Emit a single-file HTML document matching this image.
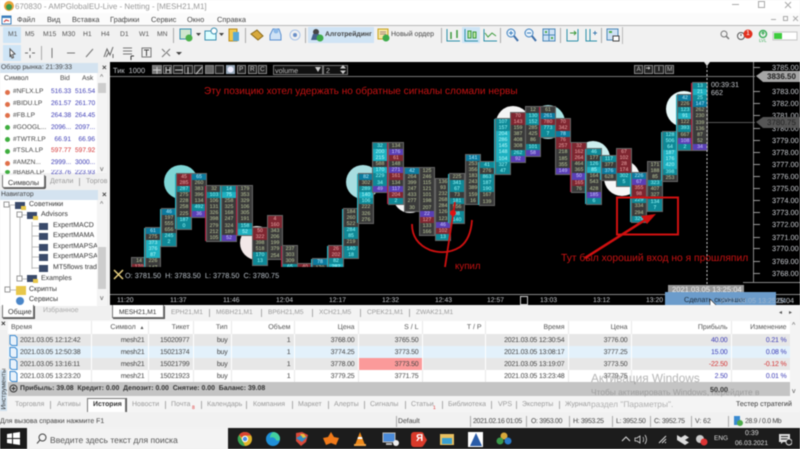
<!DOCTYPE html>
<html lang="ru"><head><meta charset="utf-8"><title>MT5</title>
<style>
*{box-sizing:border-box}
html,body{margin:0;padding:0;width:800px;height:449px;overflow:hidden;background:#f0f0f0}
body{font-family:"Liberation Sans","DejaVu Sans",sans-serif;font-size:7px;color:#333;text-rendering:geometricPrecision}
#p{position:absolute;left:0;top:0;width:800px;height:449px;overflow:hidden;filter:blur(.42px)}
.a{position:absolute;white-space:nowrap}
.r{position:absolute}
#chart{position:absolute;left:110px;top:62px;width:690px;height:243px;background:#000}
.c{position:absolute;width:14px;outline:1px solid #666;outline-offset:-.5px;background:#3a3a3a}
.c i{display:block;height:6.1px;line-height:6.1px;font-style:normal;font-size:5.2px;text-align:center;color:#c2cfa0;overflow:hidden}
.c .t{background:#0f8896;color:#9ff}
.c .k{background:#1eb0c0;color:#bff}
.c .e{background:#7e2630;color:#eaa}
.c .v{background:#5a3fb5;color:#ccf}
.c .b{background:#0b7a9e;color:#bef}
.L{box-shadow:-2px 0 0 #1fb8c8}
.X{box-shadow:-2px 0 0 #b8173a}
.m{position:absolute;color:#444;font-size:7.4px;top:15px}
.tf{position:absolute;top:31px;font-size:6.8px;color:#555}
.ax{position:absolute;left:772px;color:#c6c9ce;font-size:7.4px}
.tick{position:absolute;left:753px;width:7px;height:1px;background:#999}
.tm{position:absolute;top:296.500px;color:#c6c9ce;font-size:6.800px}
.bt{position:absolute;top:65px;width:9px;height:9px;border:1px solid #888;background:#222}
table{position:absolute;border-collapse:collapse;table-layout:fixed}
td,th{padding:0 3px;overflow:hidden;white-space:nowrap;font-weight:normal;border-right:1px solid #fff;font-size:7px;color:#444}
.tb td,.tb th{height:12px;text-align:right;letter-spacing:-.2px}
.tb th{height:13px;background:#fff;color:#555;border-right:1px solid #e8e8e8;letter-spacing:0}
.g td{background:#e7e7e7}.l td{background:#e3f1fb}.w td{background:#fff;border-right:1px solid #e8e8e8}
.bl{color:#3b3bb5!important}.rd{color:#d43030!important}
.tab{position:absolute;top:308.500px;color:#999;font-size:6.600px}
.bot{position:absolute;top:401px;color:#999;font-size:7px}
.sep{position:absolute;width:1px;background:#aaa}
.st{position:absolute;top:418px;color:#444;font-size:6.900px}
.sd{letter-spacing:-.3px}
.ico{position:absolute}
.mw td{border:0;font-size:6.600px;padding:0 2px;height:11.800px;text-align:right;color:#3b3bb5;background:#fff}
.mw td:first-child{text-align:left;color:#444;padding-left:13px}
.nv{position:absolute;font-size:7px;color:#333}
.dot{position:absolute;left:5px;width:5px;height:5px;border-radius:50%}
</style></head><body><div id="p">

<!-- title -->
<div class="r" style="left:0;top:0;width:800px;height:13px;background:#fff"></div>
<svg class="ico" style="left:3px;top:0" width="12" height="12"><circle cx="6" cy="6" r="5" fill="#e8a33a"/><circle cx="6" cy="7" r="3" fill="#3a9a4a"/></svg>
<div class="a" style="left:15px;top:1.500px;color:#999;font-size:8px">670830 - AMPGlobalEU-Live - Netting - [MESH21,M1]</div>
<div class="r" style="left:732px;top:4px;width:7px;height:1px;background:#aaa"></div>
<div class="r" style="left:758px;top:1px;width:7px;height:7px;border:1px solid #aaa"></div>
<svg class="ico" style="left:784px;top:1px" width="8" height="8"><path d="M1 1L7 7M7 1L1 7" stroke="#aaa"/></svg>

<!-- menu -->
<div class="r" style="left:0;top:13px;width:800px;height:13px;background:#fbfbfb;border-bottom:1px solid #b9b9b9"></div>
<svg class="ico" style="left:1px;top:14px" width="11" height="11"><rect x="1" y="2" width="9" height="8" fill="#fff" stroke="#3a7dbb"/><rect x="1" y="2" width="9" height="2" fill="#3a7dbb"/><path d="M3 8l2-2 3 1" stroke="#c33" fill="none"/></svg>
<span class="m" style="left:17px">Файл</span><span class="m" style="left:47px">Вид</span><span class="m" style="left:72px">Вставка</span><span class="m" style="left:110px">Графики</span><span class="m" style="left:151px">Сервис</span><span class="m" style="left:187px">Окно</span><span class="m" style="left:217px">Справка</span>
<div class="a" style="left:771px;top:19px;width:5px;height:1px;background:#aaa"></div>
<div class="a" style="left:783px;top:16px;width:5px;height:5px;border:1px solid #aaa"></div>
<svg class="ico" style="left:793px;top:16px" width="6" height="6"><path d="M0 0L5 5M5 0L0 5" stroke="#aaa"/></svg>

<!-- toolbar -->
<div class="r" style="left:0;top:26px;width:800px;height:36px;background:#f1f1f1"></div>
<div class="r" style="left:3px;top:27px;width:18px;height:16px;background:#cfe5f6"></div>
<span class="tf" style="left:8px">M1</span><span class="tf" style="left:25px">M5</span><span class="tf" style="left:43px">M15</span><span class="tf" style="left:62px">M30</span><span class="tf" style="left:83px">H1</span><span class="tf" style="left:101px">H4</span><span class="tf" style="left:120px">D1</span><span class="tf" style="left:139px">W1</span><span class="tf" style="left:157px">MN</span>
<div class="sep" style="left:173px;top:28px;height:15px"></div>
<svg class="ico" style="left:178px;top:27px" width="110" height="16">
<rect x="2" y="2" width="11" height="10" fill="#cfe6cf" stroke="#3a8fb0"/><circle cx="11" cy="11" r="3.500" fill="#4bb04b"/><path d="M18 6h5l-2.500 3z" fill="#444"/>
<rect x="27" y="4" width="11" height="9" fill="#dff" stroke="#3a8fb0"/><circle cx="36" cy="4" r="3" fill="#fff" stroke="#3a8fb0"/><path d="M41 6h5l-2.500 3z" fill="#444"/>
<rect x="51" y="2" width="8" height="12" fill="#f2c84b" stroke="#b58a20"/><rect x="55" y="5" width="6" height="9" fill="#5aa9d6"/>
</svg>
<div class="sep" style="left:245px;top:28px;height:15px"></div>
<svg class="ico" style="left:249px;top:27px" width="55" height="16">
<path d="M2 7l6-4 6 6-5 4z" fill="#d7a93c" stroke="#8a6a1a"/><path d="M24 2h6l2 6v5H21V8z" fill="#cfe2f5" stroke="#5a8fd0"/><circle cx="27" cy="4" r="2.500" fill="#8ab8e8"/>
<circle cx="46" cy="8" r="2" fill="#6a8fc8"/><circle cx="46" cy="8" r="5" fill="none" stroke="#aac4e8"/>
</svg>
<div class="sep" style="left:305px;top:28px;height:15px"></div>
<div class="r" style="left:308px;top:27px;width:66px;height:16px;background:#d0e4f5"></div>
<svg class="ico" style="left:310px;top:28px" width="14" height="14"><circle cx="6" cy="4" r="3" fill="#444"/><path d="M1 12l2-6h6l2 6z" fill="#44618a"/><circle cx="10" cy="10" r="3.500" fill="#3daa4a"/></svg>
<div class="a" style="left:325px;top:31px;font-weight:bold;font-size:6.800px;color:#444">Алготрейдинг</div>
<svg class="ico" style="left:377px;top:28px" width="13" height="14"><rect x="1" y="1" width="10" height="10" fill="#f4e6a0" stroke="#c9a420"/><path d="M3 4h6M3 6h6" stroke="#a88"/><circle cx="9" cy="10" r="3.500" fill="#3daa4a"/></svg>
<div class="a" style="left:391px;top:31px;font-size:7px;color:#444">Новый ордер</div>
<div class="sep" style="left:441px;top:28px;height:15px"></div>
<div class="r" style="left:462px;top:27px;width:18px;height:16px;background:#cfe5f6"></div>
<svg class="ico" style="left:444px;top:27px" width="90" height="16" fill="none">
<path d="M3 2v12h13" stroke="#2a8fa8"/><path d="M7 5v7M13 3v8" stroke="#3c9a3c" stroke-width="1.500"/>
<path d="M21 2v12h13" stroke="#2a8fa8"/><rect x="24" y="4" width="3" height="7" fill="#bfe6a8" stroke="#3c9a3c"/><rect x="29" y="5" width="3" height="6" fill="#bfe6a8" stroke="#3c9a3c"/>
<path d="M40 2v12h13" stroke="#2a8fa8"/><path d="M41 6l3 4 4-4 4 3" stroke="#3c9a3c"/>
</svg>
<div class="sep" style="left:500px;top:28px;height:15px"></div>
<svg class="ico" style="left:505px;top:27px" width="60" height="16" fill="none">
<circle cx="6" cy="6" r="4" stroke="#3d7fbf" fill="#e8f3fb"/><path d="M4 6h4M6 4v4" stroke="#3d7fbf"/><path d="M9 9l4 5" stroke="#3d6ea8" stroke-width="2"/>
<circle cx="24" cy="6" r="4" stroke="#3d7fbf" fill="#e8f3fb"/><path d="M22 6h4" stroke="#3d7fbf"/><path d="M27 9l4 5" stroke="#3d6ea8" stroke-width="2"/>
<rect x="38" y="2" width="12" height="12" fill="#cfe2f5" stroke="#4b88b8"/><path d="M44 2v12M38 8h12" stroke="#4b88b8"/><rect x="40" y="4" width="2" height="2" fill="#4caa4a"/><rect x="46" y="10" width="2" height="2" fill="#4caa4a"/>
</svg>
<div class="sep" style="left:560px;top:28px;height:15px"></div>
<svg class="ico" style="left:565px;top:27px" width="70" height="16" fill="none">
<path d="M2 2v12h11M13 2v12" stroke="#2a8fa8"/><path d="M5 6h6" stroke="#3c9a3c"/><path d="M9 4l2 2-2 2" stroke="#3c9a3c"/>
<path d="M21 2v12h11" stroke="#2a8fa8"/><path d="M25 2v12" stroke="#2a8fa8"/><path d="M28 6h4M30 4v4" stroke="#3c7ab0"/>
</svg>
<div class="sep" style="left:601px;top:28px;height:15px"></div>
<svg class="ico" style="left:606px;top:28px" width="14" height="14" fill="none"><rect x="1" y="1" width="11" height="11" fill="#cfe2f5" stroke="#4b88b8"/><rect x="3" y="3" width="3" height="2" fill="#4caa4a"/><rect x="7" y="8" width="6" height="5" fill="#fff" stroke="#444"/></svg>
<div class="r" style="left:622px;top:27px;width:1px;height:17px;background:#bbb"></div>
<svg class="ico" style="left:720px;top:29px" width="80" height="14" fill="none">
<circle cx="4" cy="5" r="3" stroke="#777"/><path d="M6 7l3 3" stroke="#777" stroke-width="1.500"/>
<circle cx="21" cy="7" r="3.500" stroke="#555"/><path d="M21 5v2" stroke="#555"/>
<circle cx="28" cy="5" r="4.500" fill="#e2301e"/>
<circle cx="43" cy="5" r="3.500" stroke="#3fae5a" stroke-width="1.500"/><path d="M43 6V3M41.500 4.500L43 3l1.500 1.500" stroke="#3fae5a"/>
<rect x="53" y="3" width="24" height="8" fill="#fff" stroke="#c6c6c6"/><rect x="54" y="4" width="8" height="6" fill="#3ecb3e"/>
</svg>
<div class="a" style="left:759px;top:38px;color:#3fae5a;font-size:4.500px">LVL</div>
<div class="a" style="left:746px;top:30px;color:#fff;font-size:7px">1</div>

<!-- tool row -->
<div class="r" style="left:3px;top:45px;width:18px;height:16px;background:#cfe5f6"></div>
<svg class="ico" style="left:5px;top:45px" width="185" height="16" fill="none">
<path d="M5 4l5 5-2.500.5 1 3-1.500.5-1-3L5 12z" fill="#fff" stroke="#555"/>
<path d="M25 3v3M25 10v3M20 8h3M27 8h3" stroke="#666"/>
<path d="M47 3v10" stroke="#777"/><path d="M62 8h8" stroke="#777"/><path d="M81 12l7-8" stroke="#777"/>
<path d="M99 12l3-8 3 6 3-8M101 12l3-5M108 9v4" stroke="#666"/>
<path d="M118 3h9M118 6h9M118 9h9" stroke="#777"/><path d="M126 11v4M126 11h3" stroke="#333"/>
<rect x="137" y="3" width="9" height="9" stroke="#777"/><path d="M139 5h5M141.500 5v6" stroke="#444"/>
<path d="M157 4l3 3M162 8l3 3M165 4l-8 8" stroke="#777"/><path d="M171 7h6l-3 3z" fill="#444"/>
</svg>
<div class="sep" style="left:41px;top:46px;height:14px"></div>

<!-- left panel -->
<div class="r" style="left:0;top:62px;width:110px;height:258px;background:#f0f0f0"></div>
<div class="r" style="left:0;top:63px;width:98px;height:10px;background:#d4e3f0"></div>
<div class="a" style="left:1px;top:64px;font-size:6.800px;color:#444">Обзор рынка: 21:39:33</div>
<div class="a" style="left:102px;top:63px;font-size:8px;color:#444;font-weight:bold">×</div>
<div class="r" style="left:0;top:73px;width:107px;height:100px;background:#fff"></div>
<div class="a" style="left:4px;top:75px;font-size:6.800px;color:#444">Символ</div><div class="a" style="left:60px;top:75px;font-size:6.800px;color:#444">Bid</div><div class="a" style="left:82px;top:75px;font-size:6.800px;color:#444">Ask</div>
<table class="mw" style="left:0;top:86px;width:97px"><colgroup><col style="width:49px"><col style="width:24px"><col style="width:24px"></colgroup>
<tr><td>#NFLX.LP</td><td>516.33</td><td>516.54</td></tr>
<tr><td>#BIDU.LP</td><td>261.57</td><td>261.70</td></tr>
<tr><td>#FB.LP</td><td>264.38</td><td>264.45</td></tr>
<tr><td>#GOOGL...</td><td>2096...</td><td>2097...</td></tr>
<tr><td>#TWTR.LP</td><td>66.91</td><td>66.96</td></tr>
<tr><td>#TSLA.LP</td><td class="rd">597.77</td><td class="rd">597.92</td></tr>
<tr><td>#AMZN...</td><td>2999...</td><td>3000...</td></tr>
</table>
<div class="a" style="left:13px;top:170px;font-size:6.600px;color:#444;height:4px;overflow:hidden;line-height:6px">#BABA.LP</div>
<div class="a" style="left:51px;top:170px;font-size:6.600px;color:#3b3bb5;height:4px;overflow:hidden;line-height:6px">223.76 &nbsp;223.93</div>
<div class="dot" style="top:90px;background:#e0704a"></div><div class="dot" style="top:102px;background:#e0704a"></div><div class="dot" style="top:113px;background:#e0704a"></div><div class="dot" style="top:125px;background:#3fae3f"></div><div class="dot" style="top:137px;background:#3fae3f"></div><div class="dot" style="top:149px;background:#3fae3f"></div><div class="dot" style="top:161px;background:#e0704a"></div><div class="dot" style="top:170px;height:4px;background:#3fae3f"></div>
<div class="r" style="left:97px;top:73px;width:10px;height:100px;background:#f4f4f4"></div>
<div class="r" style="left:98px;top:83px;width:8px;height:10px;background:#cdcdcd"></div>
<div class="a" style="left:100px;top:74px;font-size:7px;color:#555">^</div><div class="a" style="left:100px;top:166px;font-size:7px;color:#555">v</div>
<div class="r" style="left:2px;top:175px;width:43px;height:13px;background:#fff;border:1px solid #777;border-top:0;border-radius:0 0 2px 2px;box-shadow:1px 1px 0 #555"></div>
<div class="a" style="left:8px;top:177.500px;font-size:7.200px;color:#333">Символы</div><div class="a" style="left:50px;top:177.500px;font-size:7px;color:#999">Детали</div><div class="r" style="left:79px;top:178px;width:1px;height:8px;background:#aaa"></div><div class="a" style="left:86px;top:177.500px;font-size:7px;color:#999">Торгов</div>

<div class="r" style="left:0;top:190px;width:98px;height:10px;background:#d4e3f0"></div>
<div class="a" style="left:1px;top:191px;font-size:6.800px;color:#444">Навигатор</div>
<div class="a" style="left:102px;top:190px;font-size:8px;color:#444;font-weight:bold">×</div>
<div class="r" style="left:0;top:200px;width:107px;height:106px;background:#fff"></div>
<svg class="ico" style="left:0;top:200px" width="100" height="106" fill="none">
<path d="M10 5v85M10 5h7M20 12v65M20 15h7M32 22v47M32 26h9M32 36h9M32 47h9M32 57h9M32 68h9M20 79h7M10 90h7" stroke="#bbb"/>
<g fill="#3a4a6a"><path d="M15 2h10v7H15z"/><path d="M27 12h10v7H27z"/><path d="M39 23h9v7h-9zM39 33h9v7h-9zM39 44h9v7h-9zM39 54h9v7h-9zM39 65h9v7h-9zM27 75h10v7H27z"/></g>
<g fill="#e8c74a"><rect x="21" y="6" width="5" height="4"/><rect x="33" y="16" width="5" height="4"/><rect x="33" y="79" width="5" height="4"/><rect x="16" y="86" width="10" height="9"/></g>
<circle cx="20" cy="101" r="4" fill="#4a86c8"/>
<rect x="4" y="2" width="5" height="5" fill="#fff" stroke="#999"/><rect x="17" y="12" width="5" height="5" fill="#fff" stroke="#999"/><rect x="17" y="76" width="5" height="5" fill="#fff" stroke="#999"/><rect x="5" y="87" width="5" height="5" fill="#fff" stroke="#999"/>
</svg>
<span class="nv" style="left:29px;top:201px">Советники</span><span class="nv" style="left:41px;top:211px">Advisors</span><span class="nv" style="left:53px;top:222px">ExpertMACD</span><span class="nv" style="left:53px;top:232px">ExpertMAMA</span><span class="nv" style="left:53px;top:243px;width:44px;overflow:hidden">ExpertMAPSAI</span><span class="nv" style="left:53px;top:253px;width:44px;overflow:hidden">ExpertMAPSAI</span><span class="nv" style="left:53px;top:264px;width:44px;overflow:hidden;white-space:nowrap">MT5flows trad</span><span class="nv" style="left:41px;top:275px">Examples</span><span class="nv" style="left:29px;top:286px">Скрипты</span><span class="nv" style="left:29px;top:296px;height:10px;overflow:hidden">Сервисы</span>
<div class="r" style="left:97px;top:200px;width:10px;height:106px;background:#f4f4f4"></div>
<div class="r" style="left:98px;top:247px;width:8px;height:42px;background:#cdcdcd"></div>
<div class="a" style="left:100px;top:201px;font-size:7px;color:#555">^</div><div class="a" style="left:100px;top:295px;font-size:7px;color:#555">v</div>
<div class="r" style="left:2px;top:305px;width:32px;height:13px;background:#fff;border:1px solid #777;border-top:0;box-shadow:1px 1px 0 #555"></div>
<div class="a" style="left:8px;top:307px;font-size:7.200px;color:#333">Общие</div><div class="a" style="left:43px;top:307px;font-size:7px;color:#aaa">Избранное</div>

<!-- chart -->
<div id="chart"></div>
<!-- chart toolbar -->
<div class="a" style="left:113px;top:65.500px;color:#c6c9ce;font-size:7.400px">Тик &nbsp;1000</div>
<div class="bt" style="left:152px;background:#777;width:10px"></div><div class="bt" style="left:163px"></div><div class="bt" style="left:173px;width:10px"></div><div class="bt" style="left:184px"></div><div class="bt" style="left:194px"></div><div class="bt" style="left:205px;background:#666"></div><div class="bt" style="left:215px"></div><div class="bt" style="left:226px;background:#9ab;border-color:#9ab"></div><div class="bt" style="left:237px"></div><div class="bt" style="left:248px"></div><div class="bt" style="left:258px"></div>
<svg class="ico" style="left:152px;top:64px" width="120" height="12" fill="none" stroke="#ccc"><path d="M5 3v7M1 6h8M14 3v6M18 3v6M14 6h4M23 6h8M36 3v7M44 10l6-7"/><circle cx="78.500" cy="5.500" r="3" fill="#eef" stroke="none"/></svg>
<div class="a" style="left:239px;top:65.500px;color:#ccc;font-size:6.500px">P</div><div class="a" style="left:250px;top:65.500px;color:#ccc;font-size:6.500px">R</div><div class="a" style="left:260px;top:65.500px;color:#ccc;font-size:6.500px">C</div>
<div class="r" style="left:273px;top:65px;width:50px;height:10px;border:1px solid #777;background:#111"></div>
<div class="a" style="left:275px;top:65.500px;color:#bbb;font-size:7.200px">volume</div>
<svg class="ico" style="left:315px;top:67px" width="7" height="6"><path d="M0 0h6l-3 5z" fill="#ccc"/></svg>
<div class="r" style="left:323px;top:65px;width:25px;height:10px;border:1px solid #777;background:#111"></div>
<div class="a" style="left:326px;top:65.500px;color:#bbb;font-size:7.200px">2</div>
<svg class="ico" style="left:340px;top:65px" width="7" height="9"><path d="M0 3.500h6L3 0zM0 5.500h6L3 9z" fill="#ccc"/></svg>
<div class="bt" style="left:634px"></div><div class="bt" style="left:644px"></div><div class="bt" style="left:654px;width:10px"></div><div class="bt" style="left:665px"></div>
<div class="a" style="left:636.500px;top:65.500px;color:#bbb;font-size:6.500px">A</div><div class="a" style="left:645.500px;top:65px;color:#ddd;font-size:6px">➔</div><div class="a" style="left:658px;top:65.500px;color:#ddd;font-size:6.500px">I</div><div class="a" style="left:667px;top:65.500px;color:#bbb;font-size:6.500px">M</div>
<svg class="ico" style="left:704px;top:62px" width="7" height="5"><path d="M0 0h6L3 4z" fill="#ddd"/></svg>

<!-- circles -->
<svg class="ico" style="left:110px;top:62px" width="650" height="225">
<g>
<circle cx="71" cy="120" r="17" fill="#7fd6d6"/><circle cx="147" cy="181" r="17" fill="#f2e8e8"/>
<circle cx="253" cy="120" r="17" fill="#a8dde0"/><circle cx="300" cy="134" r="17" fill="#f4f4f4"/>
<circle cx="403" cy="61" r="17" fill="#f4f4f4"/><circle cx="438" cy="60" r="17" fill="#a8e4e4"/>
<circle cx="483" cy="96" r="17" fill="#cceeee"/><circle cx="512" cy="116" r="18" fill="#f6f6f6"/>
<circle cx="574" cy="47" r="18" fill="#eafafa"/>
</g></svg>

<!-- footprint columns -->
<div class="r" style="left:110px;top:78px;width:600px;height:189px;overflow:hidden">
<div style="position:absolute;left:-110px;top:-78px;width:800px;height:300px">
<div class="c" style="left:132px;top:258px"><i>14</i><i class="e">170</i><i>147</i></div>
<div class="c L" style="left:146px;top:228px"><i class="b">61</i><i>275</i><i class="k">373</i><i class="k">376</i><i class="k">87</i><i>226</i><i>147</i></div>
<div class="c L" style="left:162px;top:209px"><i class="b">46</i><i>197</i><i>555</i><i>656</i><i class="t">245</i><i class="t">2</i></div>
<div class="c L" style="left:177px;top:174px"><i class="e">45</i><i class="e">285</i><i class="t">287</i><i>275</i><i>228</i><i>258</i><i>225</i><i class="t">187</i><i class="t">0</i></div>
<div class="c X" style="left:192px;top:174px"><i class="b">65</i><i>260</i><i>383</i><i>396</i><i>134</i><i class="t">492</i><i class="v">36</i></div>
<div class="c X" style="left:207px;top:186px"><i>32</i><i class="t">103</i><i>106</i><i>131</i><i>326</i><i>398</i><i>279</i><i>212</i><i>105</i></div>
<div class="c L" style="left:222px;top:186px"><i class="t">14</i><i class="k">75</i><i>258</i><i>325</i><i>168</i><i>247</i><i>324</i><i>189</i><i class="v">52</i></div>
<div class="c X" style="left:238px;top:186px"><i>179</i><i>353</i><i>329</i><i>106</i><i>305</i><i>191</i><i class="t">158</i><i class="k">52</i></div>
<div class="c" style="left:253px;top:228px"><i class="e">50</i><i class="e">322</i><i>398</i><i>518</i><i class="t">170</i><i class="t">13</i></div>
<div class="c" style="left:268px;top:216px"><i class="e">4</i><i class="e">160</i><i>343</i><i>206</i><i>199</i><i>379</i><i>254</i></div>
<div class="c X" style="left:283px;top:246px"><i>237</i><i>303</i><i>309</i><i class="t">65</i></div>
<div class="c" style="left:298px;top:264px"><i class="e">40</i></div>
<div class="c L" style="left:313px;top:259px"><i class="b">78</i><i>179</i></div>
<div class="c L" style="left:329px;top:246px"><i class="e">26</i><i class="e">202</i><i class="t">82</i><i class="k">282</i></div>
<div class="c L" style="left:344px;top:209px"><i>184</i><i>260</i><i>522</i><i class="t">284</i><i class="t">85</i><i>219</i><i class="t">140</i><i class="t">18</i></div>
<div class="c L" style="left:359px;top:174px"><i class="b">82</i><i>302</i><i class="t">289</i><i class="k">140</i><i class="t">106</i><i>222</i><i>326</i><i>276</i></div>
<div class="c" style="left:373px;top:143px"><i class="t">32</i><i class="k">200</i><i class="k">215</i><i>588</i><i class="k">170</i><i class="t">229</i><i class="t">34</i><i class="v">49</i></div>
<div class="c X" style="left:389px;top:143px"><i>134</i><i class="v">176</i><i class="e">61</i><i>148</i><i class="v">271</i><i class="e">161</i><i>134</i><i class="v">117</i><i class="e">204</i><i class="t">2</i></div>
<div class="c" style="left:405px;top:168px"><i class="b">42</i><i>264</i><i>399</i><i>247</i><i>433</i><i>277</i><i>30</i></div>
<div class="c" style="left:420px;top:168px"><i>125</i><i>246</i><i>115</i><i>121</i><i>101</i><i>198</i><i>207</i><i class="v">22</i><i class="e">127</i><i>133</i><i>166</i></div>
<div class="c" style="left:436px;top:179px"><i>136</i><i>93</i><i>232</i><i>268</i><i>284</i><i>126</i><i>123</i><i class="v">46</i><i class="e">102</i><i class="t">13</i></div>
<div class="c L" style="left:450px;top:174px"><i>225</i><i class="t">341</i><i class="t">67</i><i>73</i><i class="t">181</i><i>556</i><i class="t">98</i><i class="t">140</i></div>
<div class="c" style="left:466px;top:155px"><i class="b">141</i><i>253</i><i>356</i><i>183</i><i>243</i><i>389</i><i>159</i><i>16</i></div>
<div class="c L" style="left:480px;top:162px"><i class="t">41</i><i>276</i><i class="t">863</i><i class="t">187</i><i class="t">190</i><i>167</i><i>139</i></div>
<div class="c L" style="left:496px;top:119px"><i class="t">107</i><i class="t">157</i><i class="k">204</i><i class="k">286</i><i class="k">145</i><i class="k">148</i><i class="k">104</i><i class="t">327</i><i class="t">47</i></div>
<div class="c" style="left:511px;top:113px"><i class="e">70</i><i class="e">143</i><i>159</i><i>387</i><i>408</i><i>308</i><i class="t">262</i><i class="v">92</i></div>
<div class="c" style="left:526px;top:107px"><i>12</i><i class="t">130</i><i class="t">152</i><i>285</i><i>425</i><i>86</i><i class="t">101</i><i class="v">58</i></div>
<div class="c X" style="left:541px;top:107px"><i>61</i><i class="b">261</i><i class="e">780</i><i class="t">773</i><i class="t">7</i></div>
<div class="c" style="left:556px;top:119px"><i class="e">70</i><i class="e">342</i><i class="b">78</i><i class="e">76</i><i class="e">257</i><i>218</i><i>185</i><i>355</i><i class="v">149</i></div>
<div class="c X" style="left:572px;top:143px"><i class="e">32</i><i class="e">162</i><i class="e">264</i><i>464</i><i>365</i><i class="v">50</i><i class="e">165</i><i>76</i></div>
<div class="c L" style="left:587px;top:149px"><i class="t">46</i><i>177</i><i class="t">126</i><i class="k">85</i><i>164</i><i>543</i><i>428</i><i class="v">185</i><i class="t">6</i></div>
<div class="c L" style="left:602px;top:156px"><i class="t">117</i><i>377</i><i class="b">376</i><i>628</i></div>
<div class="c" style="left:617px;top:149px"><i class="e">67</i><i class="e">102</i><i class="e">28</i><i class="e">174</i><i class="t">302</i><i class="t">5</i></div>
<div class="c L" style="left:632px;top:173px"><i class="b">226</i><i class="v">67</i><i class="e">355</i><i class="e">98</i><i class="t">229</i><i>334</i><i>294</i><i class="t">329</i></div>
<div class="c" style="left:648px;top:162px"><i>171</i><i>188</i><i>85</i><i class="t">323</i><i>407</i><i>327</i><i class="t">134</i><i class="t">7</i></div>
<div class="c L" style="left:663px;top:132px"><i class="t">128</i><i class="t">506</i><i class="t">64</i><i class="k">187</i><i class="k">176</i><i class="k">420</i><i class="t">398</i><i>253</i></div>
<div class="c L" style="left:678px;top:95px"><i class="b">42</i><i>226</i><i class="t">123</i><i class="k">91</i><i>122</i><i class="t">393</i><i>667</i><i class="v">108</i><i class="t">2</i></div>
<div class="c X" style="left:693px;top:83px"><i class="t">13</i><i class="k">21</i><i class="t">25</i><i class="b">147</i><i>262</i><i>230</i><i>339</i><i>136</i><i>87</i><i>52</i><i class="v">34</i></div>
</div></div>

<!-- lines -->
<div class="r" style="left:110px;top:76px;width:645px;height:1px;background:#777"></div>
<div class="r" style="left:707px;top:122px;width:48px;height:1px;background:#555"></div>
<svg class="ico" style="left:706px;top:66px" width="3" height="230"><path d="M1 0v230" stroke="#ccc" stroke-dasharray="2 2"/></svg>
<div class="a" style="left:711px;top:80px;color:#c6c9ce;font-size:7.200px">00:39:31</div><div class="a" style="left:711px;top:88px;color:#c6c9ce;font-size:7.200px">662</div>

<!-- OHLC -->
<div class="a" style="left:125px;top:271px;color:#b8c0c8;font-size:7.300px">O: 3781.50 &nbsp;H: 3783.50 &nbsp;L: 3778.50 &nbsp;C: 3780.75</div>
<svg class="ico" style="left:113px;top:269px" width="11" height="11"><path d="M1 1l9 9M10 1L1 10" stroke="#e8d080" stroke-width="1.500"/></svg>

<!-- axis -->
<div class="r" style="left:753px;top:62px;width:1px;height:220px;background:#888"></div>
<div class="r" style="left:743px;top:282px;width:57px;height:1px;background:#888"></div>
<div class="tick" style="top:67px"></div><div class="tick" style="top:91px"></div><div class="tick" style="top:103px"></div><div class="tick" style="top:115px"></div><div class="tick" style="top:128px"></div><div class="tick" style="top:140px"></div><div class="tick" style="top:152px"></div><div class="tick" style="top:164px"></div><div class="tick" style="top:176px"></div><div class="tick" style="top:188px"></div><div class="tick" style="top:200px"></div><div class="tick" style="top:212px"></div><div class="tick" style="top:224px"></div><div class="tick" style="top:237px"></div><div class="tick" style="top:248px"></div><div class="tick" style="top:261px"></div><div class="tick" style="top:273px"></div>
<span class="ax" style="top:62.500px">3785.00</span><span class="ax" style="top:86.500px">3783.00</span><span class="ax" style="top:98.500px">3782.00</span><span class="ax" style="top:110.500px">3781.00</span><span class="ax" style="top:123.500px">3780.00</span><span class="ax" style="top:135.500px">3779.00</span><span class="ax" style="top:147.500px">3778.00</span><span class="ax" style="top:159.500px">3777.00</span><span class="ax" style="top:171.500px">3776.00</span><span class="ax" style="top:183.500px">3775.00</span><span class="ax" style="top:195.500px">3774.00</span><span class="ax" style="top:207.500px">3773.00</span><span class="ax" style="top:219.500px">3772.00</span><span class="ax" style="top:232.500px">3771.00</span><span class="ax" style="top:243.500px">3770.00</span><span class="ax" style="top:256.500px">3769.00</span><span class="ax" style="top:268.500px">3768.00</span>
<svg class="ico" style="left:756px;top:71px" width="44" height="58"><path d="M0 5l7-5h37v11H7z" fill="#a6a6a6"/><path d="M0 51l7-5h37v11H7z" fill="#555"/></svg>
<div class="a" style="left:767px;top:72px;color:#222;font-size:8px;font-weight:bold">3836.50</div>
<div class="a" style="left:767px;top:118px;color:#222;font-size:8px">3780.75</div>

<!-- annotations -->
<div class="a" style="left:204px;top:86px;color:#c81212;font-size:10.050px">Эту позицию хотел удержать но обратные сигналы сломали нервы</div>
<div class="a" style="left:455px;top:261px;color:#c81212;font-size:9.700px">купил</div>
<div class="a" style="left:561px;top:253px;color:#c81212;font-size:10.300px">Тут был хороший вход но я прошляпил</div>
<svg class="ico" style="left:400px;top:190px" width="300" height="85" fill="none">
<rect x="217" y="7.500" width="61" height="37" stroke="#d01010" stroke-width="2"/>
<path d="M185 68L245 30" stroke="#d01010" stroke-width="2.500"/><path d="M256 24l-15 2 6 8z" fill="#d01010"/>
<path d="M12 34c0 12 6 21 18 26 12 4 22 2 30-3 7-5 11-13 12-27" stroke="#d01010" stroke-width="1.800"/>
<path d="M55 12L45 77" stroke="#d01010" stroke-width="1.800"/><circle cx="53" cy="23" r="3" fill="#e01010"/>
</svg>

<!-- time axis -->
<div class="r" style="left:110px;top:294px;width:690px;height:1px;background:#888"></div>
<span class="tm" style="left:117px">11:20</span><span class="tm" style="left:170px">11:37</span><span class="tm" style="left:223px">11:46</span><span class="tm" style="left:276px">12:04</span><span class="tm" style="left:329px">12:17</span><span class="tm" style="left:382px">12:32</span><span class="tm" style="left:435px">12:43</span><span class="tm" style="left:487px">12:57</span><span class="tm" style="left:540px">13:03</span><span class="tm" style="left:593px">13:12</span><span class="tm" style="left:646px">13:20</span>
<div class="r" style="left:520px;top:296px;width:8px;height:9px;border:1px solid #ccc"></div>
<div class="r" style="left:668px;top:285px;width:76px;height:8px;background:#9a9a9a"></div>
<div class="a" style="left:672px;top:284.500px;color:#eee;font-size:7.600px">2021.03.05 13:25:04</div>
<div class="r" style="left:665px;top:292px;width:111px;height:13px;background:#6c9ccb"></div>
<div class="a" style="left:684px;top:294.500px;color:#1c2c3c;font-size:7.200px">Сделать скриншот</div>
<div class="a" style="left:720px;top:296px;color:#9db4cc;font-size:7.200px">2021.03.05 13:25:04</div>
<div class="a" style="left:776px;top:296px;color:#c6c9ce;font-size:7.200px">25:04</div>
<svg class="ico" style="left:709px;top:299px" width="8" height="12"><path d="M1 0v9l2-2 2 4 1.500-.5L5 7h3z" fill="#fff" stroke="#222" stroke-width=".6"/></svg>

<!-- tabs -->
<div class="r" style="left:110px;top:305px;width:690px;height:15px;background:#f3f3f3"></div>
<div class="r" style="left:112px;top:305px;width:52px;height:13px;background:#fff;border:1px solid #777;border-top:0;box-shadow:1px 1px 0 #555"></div>
<span class="tab" style="left:119px;color:#333">MESH21,M1</span><span class="tab" style="left:171px">EPH21,M1</span><span class="tab" style="left:216px">M6BH21,M1</span><span class="tab" style="left:268px">BP6H21,M5</span><span class="tab" style="left:319px">XCH21,M5</span><span class="tab" style="left:367px">CPEK21,M1</span><span class="tab" style="left:416px">ZWAK21,M1</span>
<div class="sep" style="left:209px;top:309px;height:8px"></div><div class="sep" style="left:261px;top:309px;height:8px"></div><div class="sep" style="left:312px;top:309px;height:8px"></div><div class="sep" style="left:360px;top:309px;height:8px"></div><div class="sep" style="left:409px;top:309px;height:8px"></div>
<div class="a" style="left:779px;top:309px;font-size:6px;color:#555">◂</div><div class="a" style="left:789px;top:309px;font-size:6px;color:#555">▸</div>

<!-- toolbox -->
<div class="r" style="left:0;top:320px;width:800px;height:78px;background:#f4f4f4"></div>
<div class="a" style="left:1px;top:319px;font-size:8px;color:#333;font-weight:bold">×</div>
<div class="r" style="left:0;top:330px;width:7px;height:97px;background:#f0f0f0"></div>
<div class="r" style="left:0;top:370px;width:7px;height:41px;background:#cfe0ee"></div>
<div class="a" style="left:-15px;top:385.500px;font-size:6.600px;color:#333;transform:rotate(-90deg);width:38px;text-align:center;height:9px;line-height:9px">Инструменты</div>
<table class="tb" style="left:8px;top:321px;width:782px"><colgroup><col style="width:83px"><col style="width:57px"><col style="width:45px"><col style="width:38px"><col style="width:63px"><col style="width:64px"><col style="width:64px"><col style="width:63px"><col style="width:83px"><col style="width:63px"><col style="width:100px"><col style="width:59px"></colgroup>
<tr><th style="text-align:left">Время</th><th>Символ &nbsp;<span style="font-size:5px">▲</span></th><th>Тикет</th><th>Тип</th><th>Объем</th><th>Цена</th><th>S / L</th><th>T / P</th><th>Время</th><th>Цена</th><th>Прибыль</th><th>Изменение</th></tr>
<tr class="g"><td style="text-align:left"><span style="padding-left:9px">2021.03.05 12:12:42</span></td><td>mesh21</td><td>15020977</td><td>buy</td><td>1</td><td>3768.00</td><td>3765.50</td><td></td><td>2021.03.05 12:30:54</td><td>3776.00</td><td class="bl">40.00</td><td class="bl">0.21 %</td></tr>
<tr class="l"><td style="text-align:left"><span style="padding-left:9px">2021.03.05 12:50:38</span></td><td>mesh21</td><td>15021374</td><td>buy</td><td>1</td><td>3774.25</td><td>3773.50</td><td></td><td>2021.03.05 13:08:17</td><td>3777.25</td><td class="bl">15.00</td><td class="bl">0.08 %</td></tr>
<tr class="g"><td style="text-align:left"><span style="padding-left:9px">2021.03.05 13:16:11</span></td><td>mesh21</td><td>15021799</td><td>buy</td><td>1</td><td>3778.00</td><td style="background:#fb9a9a">3773.50</td><td></td><td>2021.03.05 13:19:07</td><td>3773.50</td><td class="rd">-22.50</td><td class="rd">-0.12 %</td></tr>
<tr class="w"><td style="text-align:left"><span style="padding-left:9px">2021.03.05 13:23:20</span></td><td>mesh21</td><td>15021923</td><td>buy</td><td>1</td><td>3779.25</td><td>3771.75</td><td></td><td>2021.03.05 13:23:48</td><td>3779.75</td><td class="bl">2.50</td><td class="bl">0.01 %</td></tr>
</table>
<svg class="ico" style="left:9px;top:335px" width="9" height="48" fill="#e8f2fb" stroke="#3b8ad0"><path d="M1 .5h5l2 2v8H3L1 9zM1 12.500h5l2 2v8H3L1 21zM1 24.500h5l2 2v8H3L1 33zM1 36.500h5l2 2v8H3L1 45z"/></svg>
<div class="r" style="left:8px;top:382px;width:782px;height:14px;background:#c4c4c4"></div>
<svg class="ico" style="left:9px;top:384px" width="10" height="10" fill="none"><circle cx="4.500" cy="4.500" r="3.500" stroke="#333"/><path d="M2.500 4.500h4M4.500 2.500v4" stroke="#333"/></svg>
<div class="a" style="left:20px;top:384.500px;font-size:6.900px;font-weight:bold;color:#333">Прибыль: 39.08 &nbsp;Кредит: 0.00 &nbsp;Депозит: 0.00 &nbsp;Снятие: 0.00 &nbsp;Баланс: 39.08</div>
<div class="a" style="left:710px;top:384.500px;font-size:7.200px;font-weight:bold;color:#333">50.00</div>
<div class="r" style="left:790px;top:321px;width:10px;height:76px;background:#f4f4f4"></div>
<div class="a" style="left:792px;top:322px;font-size:7px;color:#555">^</div><div class="a" style="left:792px;top:388px;font-size:7px;color:#555">v</div>

<!-- bottom tabs -->
<div class="r" style="left:7px;top:397px;width:793px;height:15px;background:#f4f4f4"></div>
<div class="r" style="left:87px;top:398px;width:39px;height:14px;background:#fff;border:1px solid #777;border-bottom:0;box-shadow:1px 0 0 #555"></div>
<span class="bot" style="left:15px">Торговля</span><span class="bot" style="left:57px">Активы</span><span class="bot" style="left:93px;color:#333;font-weight:bold;font-size:6.900px">История</span><span class="bot" style="left:132px">Новости</span><span class="bot" style="left:171px">Почта</span><span class="bot" style="left:207px">Календарь</span><span class="bot" style="left:253px">Компания</span><span class="bot" style="left:298px">Маркет</span><span class="bot" style="left:334px">Алерты</span><span class="bot" style="left:370px">Сигналы</span><span class="bot" style="left:411px">Статьи</span><span class="bot" style="left:448px">Библиотека</span><span class="bot" style="left:498px">VPS</span><span class="bot" style="left:522px">Эксперты</span><span class="bot" style="left:565px">Журнал</span>
<span class="bot" style="left:736px;color:#333">Тестер стратегий</span>
<div class="a" style="left:192px;top:405px;font-size:5px;color:#d33">8</div><div class="a" style="left:433px;top:405px;font-size:5px;color:#d33">1</div>
<div class="sep" style="left:50px;top:401px;height:8px"></div><div class="sep" style="left:165px;top:401px;height:8px"></div><div class="sep" style="left:201px;top:401px;height:8px"></div><div class="sep" style="left:246px;top:401px;height:8px"></div><div class="sep" style="left:292px;top:401px;height:8px"></div><div class="sep" style="left:328px;top:401px;height:8px"></div><div class="sep" style="left:364px;top:401px;height:8px"></div><div class="sep" style="left:405px;top:401px;height:8px"></div><div class="sep" style="left:442px;top:401px;height:8px"></div><div class="sep" style="left:491px;top:401px;height:8px"></div><div class="sep" style="left:516px;top:401px;height:8px"></div><div class="sep" style="left:559px;top:401px;height:8px"></div>

<!-- activation -->
<div class="a" style="left:591px;top:371px;font-size:11.800px;color:rgba(120,120,120,.55)">Активация Windows</div>
<div class="a" style="left:591px;top:387px;font-size:8.400px;color:rgba(120,120,120,.5)">Чтобы активировать Windows, перейдите в</div>
<div class="a" style="left:591px;top:399px;font-size:8.400px;color:rgba(120,120,120,.55)">раздел "Параметры".</div>

<!-- status -->
<div class="r" style="left:0;top:412px;width:800px;height:16px;background:#f1f1f1"></div>
<span class="st" style="left:0">Для вызова справки нажмите F1</span><span class="st" style="left:398px">Default</span><span class="st sd" style="left:473px">2021.02.16 01:05</span><span class="st sd" style="left:531px">O: 3953.00</span><span class="st sd" style="left:573px">H: 3953.25</span><span class="st sd" style="left:616px">L: 3952.50</span><span class="st sd" style="left:654px">C: 3952.75</span><span class="st" style="left:695px">V: 62</span><span class="st sd" style="left:745px">28.9 / 0.0 Mb</span>
<div class="sep" style="left:396px;top:416px;height:11px"></div><div class="sep" style="left:470px;top:416px;height:11px"></div><div class="sep" style="left:526px;top:416px;height:11px"></div><div class="sep" style="left:569px;top:416px;height:11px"></div><div class="sep" style="left:612px;top:416px;height:11px"></div><div class="sep" style="left:650px;top:416px;height:11px"></div><div class="sep" style="left:691px;top:416px;height:11px"></div><div class="sep" style="left:728px;top:416px;height:11px"></div>
<svg class="ico" style="left:733px;top:415px" width="11" height="13"><rect x="1" y="1" width="6" height="9" fill="#3a8ad0"/><circle cx="7" cy="8" r="3" fill="#4caa4a"/></svg>

<!-- taskbar -->
<div class="r" style="left:0;top:428px;width:800px;height:21px;background:#1c1c1c"></div>
<div class="r" style="left:27px;top:428px;width:201px;height:21px;background:#f3f3f3"></div>
<svg class="ico" style="left:7px;top:432px" width="13" height="13" fill="#fff"><path d="M0 2l5-.8V6H0zM6 1l7-1v6H6zM0 7h5v4.800L0 11zM6 7h7v6l-7-1z"/></svg>
<svg class="ico" style="left:36px;top:433px" width="11" height="11" fill="none"><circle cx="6.500" cy="4.500" r="3.500" stroke="#444"/><path d="M4 7l-3 3.500" stroke="#444"/></svg>
<div class="a" style="left:50px;top:435px;color:#555;font-size:8.600px">Введите здесь текст для поиска</div>
<svg class="ico" style="left:236px;top:430px" width="280" height="18">
<circle cx="9" cy="9" r="7" fill="#e2b52a"/><path d="M9 2a7 7 0 0 1 6 3.500H9a3.500 3.500 0 0 0-3 2L3 5a7 7 0 0 1 6-3z" fill="#d94432"/><path d="M3 5l3 5 3 6a7 7 0 0 1-6-11z" fill="#3aa556"/><circle cx="9" cy="9" r="2.700" fill="#4a8be8" stroke="#fff"/>
<circle cx="37" cy="9" r="7" fill="#1f8fd8"/><path d="M37 2a7 7 0 0 1 7 7c0 2-3 2-4 1a4 4 0 0 0-6-2 7 7 0 0 1 3-6z" fill="#42d0a0"/>
<path d="M60 3l6-1 6 3-2 7-5 4-5-5z" fill="#d9493a"/><path d="M60 8l6-3 5 2-5 5z" fill="#2f8fc8"/><path d="M64 4l4 0 2 3-3 1z" fill="#e8c040"/>
<path d="M95 2l3 5 5 1-3 7-5-2-5 2-3-7 5-1z" fill="#f07a1a"/>
<path d="M124 2l5 13h-10z" fill="#f08a1a"/><path d="M118 14h12v2h-12z" fill="#f0a040"/><path d="M122 7h4l.6 2h-5.200z" fill="#fff"/>
<rect x="147" y="3" width="12" height="9" fill="#4a8ad8" stroke="#bbb"/><rect x="150" y="13" width="6" height="2" fill="#bbb"/><circle cx="160" cy="13" r="3" fill="#eee"/>
<rect x="175" y="2" width="13" height="15" rx="3" fill="#d93a2a"/><path d="M188 5l3 5-3 5z" fill="#d93a2a"/>
<rect x="204" y="4" width="14" height="11" fill="#e8c060"/><rect x="206" y="8" width="10" height="6" fill="#3aa0d0"/>
<rect x="232" y="2" width="15" height="15" fill="#fff"/><path d="M240 3l6 13h-12z" fill="#2a5ca8"/>
<circle cx="268" cy="6" r="3.500" fill="#d8a83a"/><circle cx="264" cy="11" r="3.500" fill="#3a9a4a"/><circle cx="272" cy="11" r="3.500" fill="#2a7ac8"/>
</svg>
<div class="a" style="left:416px;top:433px;color:#fff;font-size:10px;font-weight:bold">Я</div>
<svg class="ico" style="left:620px;top:432px" width="95" height="14" fill="none" stroke="#ddd">
<path d="M2 9l4-4 4 4"/><path d="M20 4v7l-3-2h-2V6h2zM23 5c1 2 1 3 0 5M25 3c2 3 2 6 0 9" stroke-width=".8"/>
<path d="M39 11l7-7M42 11l4-4M45 11l1-1" stroke-width="1"/>
<path d="M57 3l4 2.500 4-2.500 4 2.500-4 2.500 4 2.500-4 2.500-4-2.500-4 2.500 0 0 4-2.500-4-2.500z" fill="#ddd" stroke="none"/>
<circle cx="80" cy="7" r="4" fill="#ccc" stroke="none"/><circle cx="84" cy="10" r="3.500" fill="#d33" stroke="none"/>
</svg>
<div class="a" style="left:714px;top:435px;color:#ddd;font-size:6.500px">ENG</div>
<div class="a" style="left:745px;top:430px;color:#ddd;font-size:7px">0:39</div>
<div class="a" style="left:735px;top:440px;color:#ddd;font-size:6.600px">06.03.2021</div>
<svg class="ico" style="left:778px;top:433px" width="14" height="13" fill="none"><path d="M1 1h11v8H5l-2 2V9H1z" fill="#ddd"/><path d="M3 3.500h7M3 6h7" stroke="#333"/><circle cx="11" cy="9" r="3" fill="#222" stroke="#ddd"/></svg>

</div></body></html>
